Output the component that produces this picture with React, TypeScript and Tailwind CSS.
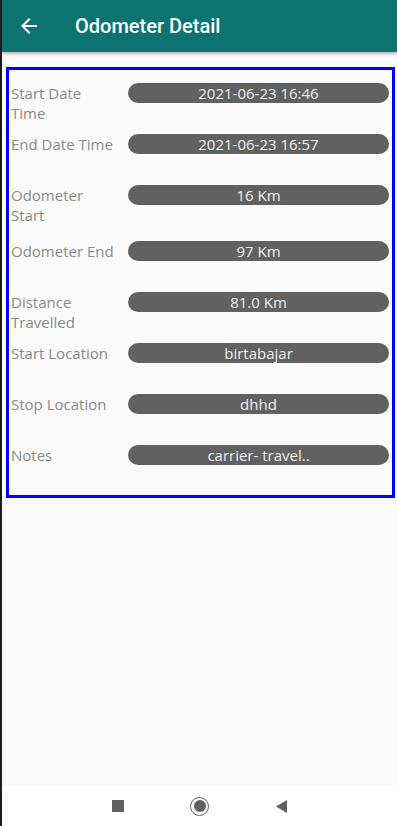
import React from 'react'

const ROWS = [
  { label: 'Start Date Time', value: '2021-06-23 16:46', h: 'h-[51px]' },
  { label: 'End Date Time', value: '2021-06-23 16:57', h: 'h-[51px]' },
  { label: 'Odometer Start', value: '16 Km', h: 'h-[56px]' },
  { label: 'Odometer End', value: '97 Km', h: 'h-[51px]' },
  { label: 'Distance Travelled', value: '81.0 Km', h: 'h-[51px]' },
  { label: 'Start Location', value: 'birtabajar', h: 'h-[51px]' },
  { label: 'Stop Location', value: 'dhhd', h: 'h-[51px]' },
  { label: 'Notes', value: 'carrier- travel..', h: 'h-[20px]' },
]

export default function App() {
  return (
    <div className="w-[397px] h-[826px] flex flex-col bg-[#fafafa] border-l-2 border-[#1c1c1c] overflow-hidden">
      {/* Toolbar */}
      <div className="relative z-10 h-[52px] shrink-0 flex items-center bg-[#0b7471] shadow-[0_2px_3px_rgba(0,0,0,0.25)]">
        <svg viewBox="0 0 24 24" className="w-6 h-6 ml-[15px] fill-white">
          <path d="M20 11H7.83l5.59-5.59L12 4l-8 8 8 8 1.41-1.41L7.83 13H20v-2z" />
        </svg>
        <span
          className="ml-[34px] text-white text-[20px] font-medium"
          style={{ fontFamily: 'Roboto, "Noto Sans", sans-serif' }}
        >
          Odometer Detail
        </span>
      </div>

      {/* Content */}
      <div className="flex-1">
        <div
          className="mt-[15px] ml-[4px] mr-[2px] border-[3px] border-[#0000ff] pt-[13px] pb-[30px] pl-[2px] pr-[3px]"
          style={{ fontFamily: '"Open Sans", "Noto Sans", sans-serif' }}
        >
          {ROWS.map(r => (
            <div key={r.label} className={`flex items-start ${r.h}`}>
              <div className="w-[106px] shrink-0 text-[15px] leading-[20px] text-[#8a8a8a]">{r.label}</div>
              <div className="ml-[11px] flex-1 h-[20px] rounded-full bg-[#616161] text-[#efefef] text-[15px] leading-[20px] text-center whitespace-nowrap">
                {r.value}
              </div>
            </div>
          ))}
        </div>
      </div>

      {/* Nav bar */}
      <div className="h-[40px] shrink-0 bg-white flex items-center justify-center">
        <div className="w-[82px] flex justify-center">
          <div className="w-[12px] h-[12px] bg-[#616161]" />
        </div>
        <div className="w-[82px] flex justify-center">
          <div className="w-[19px] h-[19px] rounded-full border-[1.5px] border-[#616161] flex items-center justify-center">
            <div className="w-[12px] h-[12px] rounded-full bg-[#616161]" />
          </div>
        </div>
        <div className="w-[82px] flex justify-center">
          <svg viewBox="0 0 11 13" className="w-[11px] h-[13px] fill-[#616161]">
            <path d="M11 0v13L0 6.5z" />
          </svg>
        </div>
      </div>
    </div>
  )
}
